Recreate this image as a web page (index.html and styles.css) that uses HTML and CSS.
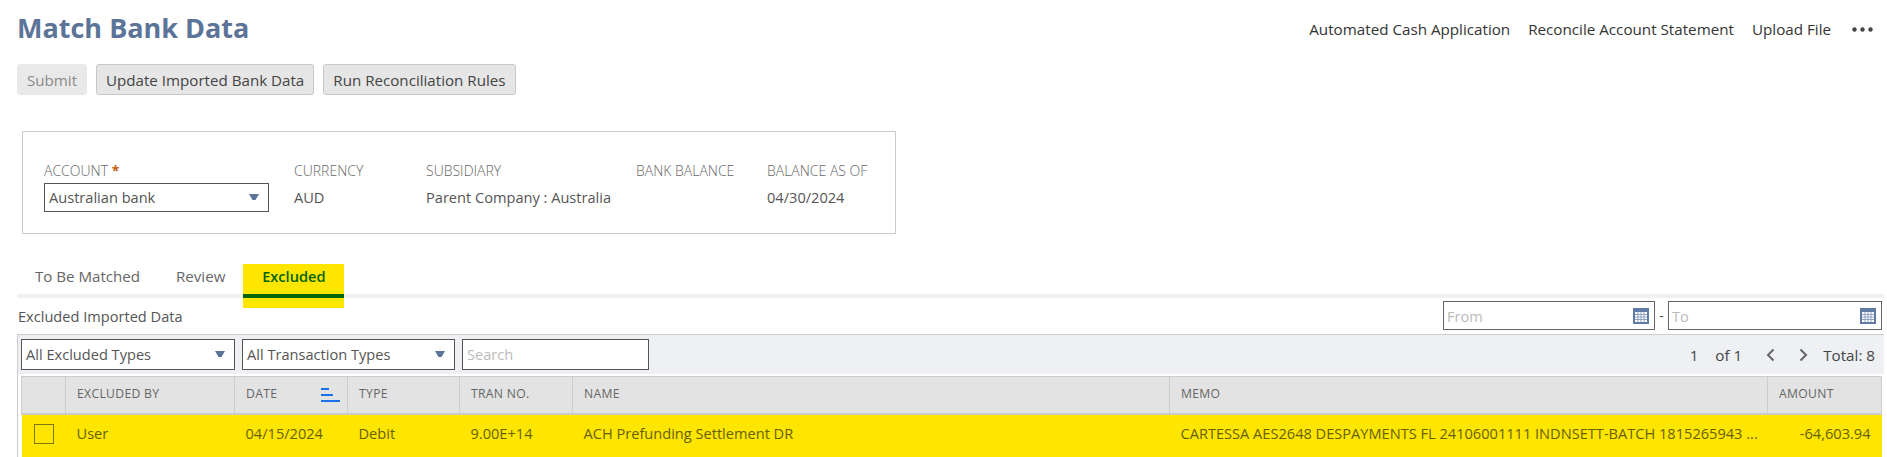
FILE: index.html
```html
<!DOCTYPE html>
<html lang="en">
<head>
<meta charset="utf-8">
<title>Match Bank Data</title>
<link rel="stylesheet" href="styles.css">
</head>
<body>
<svg width="0" height="0" class="defs">
  <defs>
    <symbol id="cal" viewBox="0 0 16 16">
      <rect width="16" height="16" fill="#5f7ba6"/>
      <rect x="2" y="4" width="12" height="10" fill="#fff"/>
      <path d="M5 4v10M8 4v10M11 4v10M2 6.5h12M2 9h12M2 11.5h12" stroke="#8fa3c2" stroke-width="1" fill="none"/>
    </symbol>
  </defs>
</svg>
<header class="top">
  <h1 class="title">Match Bank Data</h1>
  <nav class="links">
    <a class="link">Automated Cash Application</a>
    <a class="link">Reconcile Account Statement</a>
    <a class="link">Upload File</a>
    <svg class="dots" width="21" height="5" viewBox="0 0 21 5"><circle cx="2.5" cy="2.5" r="2.2"/><circle cx="10.5" cy="2.5" r="2.2"/><circle cx="18.5" cy="2.5" r="2.2"/></svg>
  </nav>
</header>
<div class="buttons">
  <button class="btn btn-off">Submit</button>
  <button class="btn">Update Imported Bank Data</button>
  <button class="btn">Run Reconciliation Rules</button>
</div>
<section class="panel">
  <div class="field f-account">
    <div class="label">ACCOUNT <span class="req">*</span></div>
    <div class="select sel-account"><span>Australian bank</span><i class="arrow"></i></div>
  </div>
  <div class="field f-currency"><div class="label">CURRENCY</div><div class="value">AUD</div></div>
  <div class="field f-sub"><div class="label">SUBSIDIARY</div><div class="value">Parent Company : Australia</div></div>
  <div class="field f-bank"><div class="label">BANK BALANCE</div><div class="value"></div></div>
  <div class="field"><div class="label">BALANCE AS OF</div><div class="value">04/30/2024</div></div>
</section>
<div class="tabs">
  <div class="tab">To Be Matched</div>
  <div class="tab">Review</div>
  <div class="tab tab-on"><span class="tab-inner">Excluded</span></div>
</div>
<div class="subhead">
  <div class="subtitle">Excluded Imported Data</div>
  <div class="dates">
    <div class="date d-from"><span class="ph">From</span><svg class="cal" width="16" height="16"><use href="#cal"/></svg></div>
    <span class="dash">-</span>
    <div class="date d-to"><span class="ph">To</span><svg class="cal" width="16" height="16"><use href="#cal"/></svg></div>
  </div>
</div>
<section class="grid-box">
  <div class="toolbar">
    <div class="select sel-a"><span>All Excluded Types</span><i class="arrow"></i></div>
    <div class="select sel-b"><span>All Transaction Types</span><i class="arrow"></i></div>
    <div class="search"><span class="ph">Search</span></div>
    <div class="pager">
      <span class="pg-num">1</span>
      <span class="pg-of">of 1</span>
      <svg class="chev" width="9" height="14" viewBox="0 0 9 14"><path d="M7.5 1.5 2 7l5.5 5.5"/></svg>
      <svg class="chev chev-next" width="9" height="14" viewBox="0 0 9 14"><path d="M1.5 1.5 7 7l-5.5 5.5"/></svg>
      <span class="pg-total">Total: 8</span>
    </div>
  </div>
  <table class="data">
    <colgroup>
      <col class="c1"><col class="c2"><col class="c3"><col class="c4"><col class="c5"><col class="c6"><col class="c7"><col class="c8">
    </colgroup>
    <thead>
      <tr>
        <th></th>
        <th>EXCLUDED BY</th>
        <th class="th-sort">DATE<svg class="sort" width="19" height="14" viewBox="0 0 19 14"><path d="M0 1h8M0 7h12M0 13h19"/></svg></th>
        <th>TYPE</th>
        <th>TRAN NO.</th>
        <th>NAME</th>
        <th>MEMO</th>
        <th>AMOUNT</th>
      </tr>
    </thead>
    <tbody>
      <tr class="row-hit">
        <td class="td-check"><span class="check"></span></td>
        <td>User</td>
        <td>04/15/2024</td>
        <td>Debit</td>
        <td>9.00E+14</td>
        <td>ACH Prefunding Settlement DR</td>
        <td class="memo">CARTESSA AES2648 DESPAYMENTS FL 24106001111 INDNSETT-BATCH 1815265943 ...</td>
        <td class="amt">-64,603.94</td>
      </tr>
    </tbody>
  </table>
</section>
</body>
</html>
```
FILE: styles.css
```css
* { box-sizing: border-box; }
html, body { margin: 0; height: 457px; overflow: hidden; background: #fff; }
body { font-family: "Open Sans", "Liberation Sans", sans-serif; font-size: 14px; color: #555; padding: 0 3px 0 17px; }
.defs { position: absolute; }

.top { display: flex; justify-content: space-between; align-items: flex-start; height: 64px; }
.title { margin: 9px 0 0; font-size: 27px; line-height: 38px; font-weight: 700; color: #5b7498; }
.links { display: flex; align-items: center; gap: 18px; margin-top: 19px; padding-right: 11px; height: 20px; }
.link { color: #333; font-size: 15.2px; }
.dots { fill: #444; margin-left: 3px; }

.buttons { display: flex; gap: 9px; height: 31px; }
.btn { font: 500 15.15px "Open Sans", sans-serif; color: #444; background: #e6e6e6; border: 1px solid #c8c8c8; border-radius: 3px; padding: 0 9px; height: 31px; white-space: nowrap; }
.btn-off { color: #8a8a8a; background: #e9e9e9; border-color: #e9e9e9; width: 70px; }

.panel { display: flex; width: 874px; height: 103px; margin: 36px 0 0 5px; padding: 29px 21px 0; border: 1px solid #ccc; }
.field { display: flex; flex-direction: column; }
.f-account { width: 250px; }
.f-currency { width: 132px; }
.f-sub { width: 210px; }
.f-bank { width: 131px; }
.label { font-size: 14px; line-height: 19px; color: #666; font-weight: 300; white-space: nowrap; }
.req { color: #c4600c; font-weight: 700; }
.value { font-size: 14.6px; line-height: 20px; margin-top: 7px; color: #555; white-space: nowrap; }

.select { display: flex; align-items: center; justify-content: space-between; border: 1px solid #555; background: #fff; font-size: 14.6px; color: #555; padding: 0 9px 1px 4px; white-space: nowrap; }
.sel-account { width: 225px; height: 29px; margin-top: 3px; }
.arrow { width: 10px; height: 6px; background: #5b7498; clip-path: polygon(0 0, 100% 0, 65% 100%, 35% 100%); }

.tabs { display: flex; height: 34px; margin-top: 30px; border-bottom: 4px solid #eef0f4; }
.tab { height: 30px; line-height: 25px; font-size: 15.1px; color: #666; }
.tab:first-child { margin-left: 18px; }
.tab:nth-child(2) { margin: 0 18px 0 36px; }
.tab-on { position: relative; width: 101px; height: 44px; margin: 0 0 -14px; background: #ffe600; color: #006400; font-size: 14.6px; font-weight: 600; text-align: center; }
.tab-inner { display: block; height: 34px; border-bottom: 4px solid #006400; }

.subhead { display: flex; justify-content: space-between; height: 36px; padding-top: 3px; padding-right: 2px; }
.subtitle { font-size: 14.6px; line-height: 30px; color: #555; padding-left: 1px; }
.dates { display: flex; align-items: center; height: 29px; color: #555; }
.date { display: flex; align-items: center; justify-content: space-between; height: 29px; border: 1px solid #666; background: #fff; padding: 0 5px 0 3px; font-size: 14.6px; }
.d-from { width: 212px; }
.d-to { width: 214px; }
.dash { width: 13px; text-align: center; }
.ph { color: #bbb; font-size: 14.6px; }

.grid-box { border: 1px solid #ccc; border-width: 1px 0 0 1px; width: 1867px; background: #fff; }
.toolbar { display: flex; align-items: center; gap: 7px; height: 39px; padding: 0 3px; background: #eef0f4; }
.sel-a { width: 214px; height: 31px; }
.sel-b { width: 213px; height: 31px; }
.search { width: 187px; height: 31px; line-height: 28px; padding-left: 4px; border: 1px solid #555; background: #fff; }
.pager { display: flex; align-items: center; margin-left: auto; font-size: 15.2px; color: #444; padding-right: 6px; }
.pg-num { margin-right: 17px; }
.chev { fill: none; stroke: #666; stroke-width: 2; margin-left: 24px; }
.pg-total { margin-left: 15px; }

.data { border-collapse: collapse; table-layout: fixed; width: 1860px; margin: 2px 0 0 3px; font-size: 14.6px; }
.c1 { width: 44px; } .c2 { width: 169px; } .c3 { width: 113px; } .c4 { width: 112px; }
.c5 { width: 113px; } .c6 { width: 597px; } .c7 { width: 598px; } .c8 { width: 114px; }
.data th { height: 37px; padding: 0 11px 2px; background: #e3e3e3; border: 1px solid #ccc; border-width: 1px 1px 2px 1px; font-size: 12.2px; font-weight: 400; color: #666; text-align: left; letter-spacing: .3px; white-space: nowrap; }
.th-sort { position: relative; }
.sort { position: absolute; right: 7px; top: 11px; stroke: #1a73e8; stroke-width: 2; fill: none; }
.row-hit td { height: 44px; background: #ffe600; color: #66600a; padding: 0 11px 7px; white-space: nowrap; overflow: hidden; }
.data .td-check { padding-left: 12px; padding-bottom: 5px; }
.check { display: block; width: 20px; height: 20px; border: 1px solid #7d7510; }
.amt { text-align: right; }
```
